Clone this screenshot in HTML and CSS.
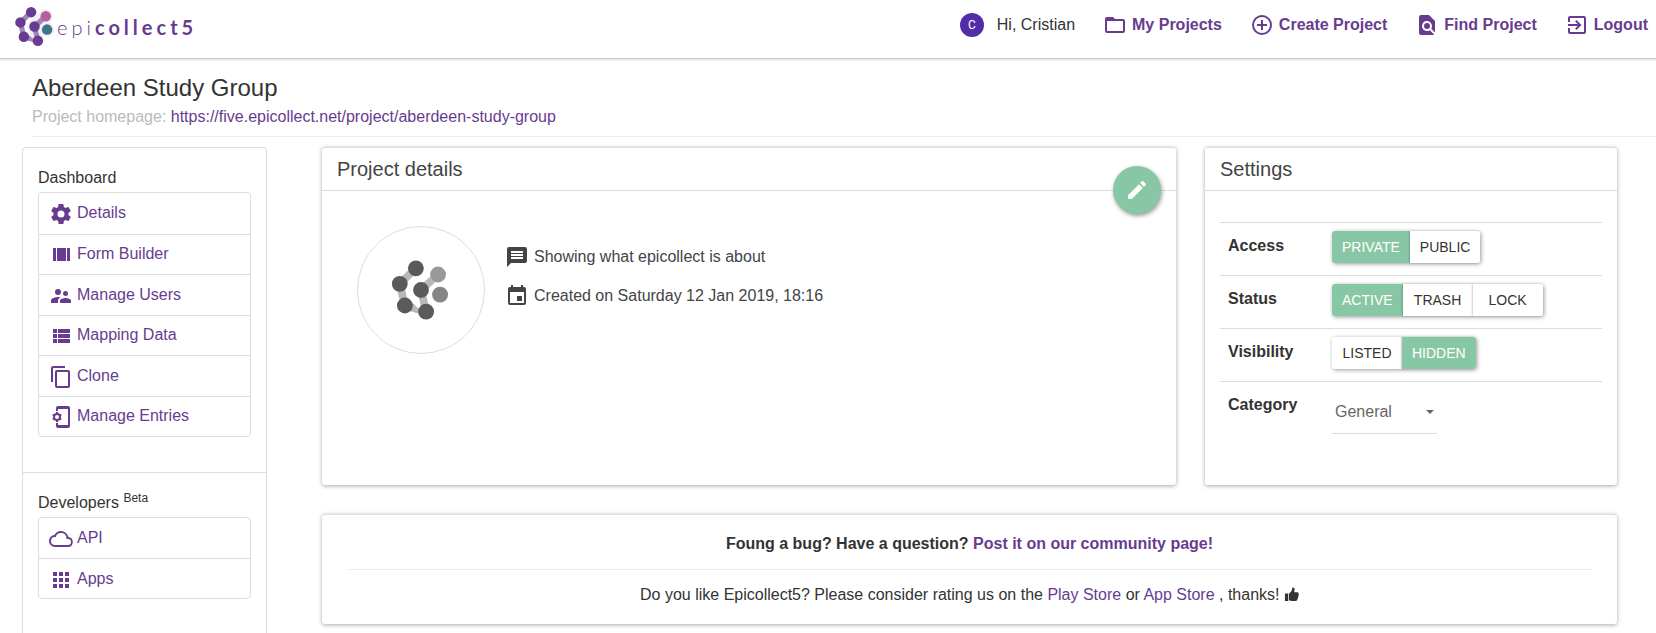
FILE: index.html
```html
<!DOCTYPE html>
<html lang="en">
<head>
<meta charset="utf-8">
<title>Aberdeen Study Group - Epicollect5</title>
<link rel="stylesheet" href="styles.css">
</head>
<body>
<svg class="sprite" aria-hidden="true">
  <symbol id="mark" viewBox="14 7 40 40">
    <path class="mark-link" d="M30.700 13 20.300 23 23.600 37 37.300 41"/>
    <path class="mark-halo" d="M45 17 34 27 36 33M46.300 30h.1"/>
    <path class="mark-link" d="M45 17 34 27 37.300 41"/>
    <g class="mark-main">
      <circle cx="30.700" cy="13" r="5.100"/><circle cx="20.300" cy="23" r="5.100"/><circle cx="34" cy="27" r="5.100"/>
      <circle cx="23.600" cy="37" r="5.100"/><circle cx="37.300" cy="41" r="5.100"/>
    </g>
    <circle class="mark-top" cx="45" cy="17" r="5.100"/>
    <circle class="mark-side" cx="46.300" cy="30" r="5.100"/>
  </symbol>
</svg>

<header class="navbar">
  <a class="brand" href="#">
    <svg class="brand-mark" aria-hidden="true"><use href="#mark"/></svg>
    <span class="brand-name">epi<b>collect5</b></span>
  </a>
  <nav class="nav">
    <span class="user"><span class="avatar">C</span>Hi, Cristian</span>
    <a href="#"><svg class="icon" viewBox="0 0 24 24"><path d="M20 18H4V8h16m0-2h-8l-2-2H4a2 2 0 0 0-2 2v12a2 2 0 0 0 2 2h16a2 2 0 0 0 2-2V8a2 2 0 0 0-2-2z"/></svg>My Projects</a>
    <a href="#"><svg class="icon" viewBox="0 0 24 24"><path d="M13 7h-2v4H7v2h4v4h2v-4h4v-2h-4V7zm-1-5a10 10 0 1 0 0 20 10 10 0 0 0 0-20zm0 18a8 8 0 1 1 0-16 8 8 0 0 1 0 16z"/></svg>Create Project</a>
    <a href="#"><svg class="icon" viewBox="0 0 24 24"><path d="M20 19.590V8l-6-6H6a2 2 0 0 0-2 2v16a2 2 0 0 0 2 2h12c.45 0 .85-.15 1.190-.4l-4.430-4.430A5 5 0 1 1 17 13c0 1.020-.31 1.970-.83 2.750L20 19.590zM9 13a3 3 0 1 0 6 0 3 3 0 0 0-6 0z"/></svg>Find Project</a>
    <a href="#"><svg class="icon" viewBox="0 0 24 24"><path d="M10.090 15.590 11.500 17l5-5-5-5-1.410 1.410L12.670 11H3v2h9.670l-2.580 2.590zM19 3H5a2 2 0 0 0-2 2v4h2V5h14v14H5v-4H3v4a2 2 0 0 0 2 2h14a2 2 0 0 0 2-2V5a2 2 0 0 0-2-2z"/></svg>Logout</a>
  </nav>
</header>

<div class="page-title">
  <h1>Aberdeen Study Group</h1>
  <p><span class="muted">Project homepage:</span> <a href="#">https://five.epicollect.net/project/aberdeen-study-group</a></p>
</div>

<div class="layout">
  <aside class="sidebar">
    <section class="side-section">
      <h2>Dashboard</h2>
      <ul class="menu menu-six">
        <li><a href="#"><svg class="icon" viewBox="0 0 24 24"><path d="M12 15.500a3.500 3.500 0 1 1 0-7 3.500 3.500 0 0 1 0 7m7.430-2.530c.04-.32.07-.64.07-.97s-.03-.66-.07-1l2.110-1.630c.19-.15.24-.42.12-.64l-2-3.460c-.12-.22-.39-.31-.61-.22l-2.490 1c-.52-.39-1.060-.73-1.690-.98l-.37-2.650A.5.500 0 0 0 14 2h-4c-.25 0-.46.18-.5.420l-.37 2.650c-.63.250-1.170.590-1.690.980l-2.490-1c-.22-.09-.49 0-.61.220l-2 3.460c-.13.220-.07.490.12.640L4.570 11c-.04.340-.07.670-.07 1s.03.650.07.970l-2.110 1.660c-.19.150-.25.420-.12.640l2 3.460c.12.220.39.300.61.220l2.490-1.010c.52.400 1.060.740 1.690.990l.37 2.650c.04.240.25.420.5.420h4c.25 0 .46-.18.500-.42l.37-2.650c.63-.26 1.170-.59 1.690-.99l2.490 1.010c.22.080.49 0 .61-.22l2-3.460c.12-.22.070-.49-.12-.64l-2.110-1.660z"/></svg>Details</a></li>
        <li><a href="#"><svg class="icon" viewBox="0 0 24 24"><path d="M4 18h3V5H4v13zM18 5v13h3V5h-3zM8 18h9V5H8v13z"/></svg>Form Builder</a></li>
        <li><a href="#"><svg class="icon" viewBox="0 0 24 24"><path d="M16.500 12a2.500 2.500 0 1 0 0-5 2.500 2.500 0 0 0 0 5zM9 11a3 3 0 1 0 0-6 3 3 0 0 0 0 6zm7.500 3c-1.830 0-5.500.920-5.500 2.750V19h11v-2.250c0-1.830-3.670-2.750-5.500-2.750zM9 13c-2.330 0-7 1.170-7 3.500V19h7v-2.250c0-.85.330-2.340 2.370-3.470C10.500 13.100 9.660 13 9 13z"/></svg>Manage Users</a></li>
        <li><a href="#"><svg class="icon" viewBox="0 0 24 24"><path d="M9 5v4h12V5M9 19h12v-4H9m0-1h12v-4H9m-5-1h4V5H4m0 14h4v-4H4m0-1h4v-4H4v4z"/></svg>Mapping Data</a></li>
        <li><a href="#"><svg class="icon" viewBox="0 0 24 24"><path d="M19 21H8V7h11m0-2H8a2 2 0 0 0-2 2v14a2 2 0 0 0 2 2h11a2 2 0 0 0 2-2V7a2 2 0 0 0-2-2m-3-4H4a2 2 0 0 0-2 2v14h2V3h12V1z"/></svg>Clone</a></li>
        <li><a href="#"><svg class="icon" viewBox="0 0 24 24"><path d="M19 1H9a2 2 0 0 0-2 2v3h2V4h10v16H9v-2H7v3a2 2 0 0 0 2 2h10a2 2 0 0 0 2-2V3a2 2 0 0 0-2-2z"/><circle class="gear-ring" cx="8" cy="12" r="3"/><path class="gear-teeth" d="M8 9V7M8 17v-2M5.400 10.500l-1.700-1M10.600 10.500l1.700-1M5.400 13.500l-1.700 1M10.600 13.500l1.700 1"/></svg>Manage Entries</a></li>
      </ul>
    </section>
    <section class="side-section">
      <h2>Developers <sup>Beta</sup></h2>
      <ul class="menu menu-two">
        <li><a href="#"><svg class="icon" viewBox="0 0 24 24"><path d="M19.350 10.040A7.490 7.490 0 0 0 12 4C9.110 4 6.600 5.640 5.350 8.040A5.994 5.994 0 0 0 0 14a6 6 0 0 0 6 6h13a5 5 0 0 0 .35-9.960zM19 18H6a4 4 0 0 1 0-8h.71a5.500 5.500 0 0 1 10.790 1.500v.5H19a3 3 0 0 1 0 6z"/></svg>API</a></li>
        <li><a href="#"><svg class="icon" viewBox="0 0 24 24"><path d="M4 8h4V4H4v4zm6 12h4v-4h-4v4zm-6 0h4v-4H4v4zm0-6h4v-4H4v4zm6 0h4v-4h-4v4zm6-10v4h4V4h-4zm-6 4h4V4h-4v4zm6 6h4v-4h-4v4zm0 6h4v-4h-4v4z"/></svg>Apps</a></li>
      </ul>
    </section>
  </aside>

  <main class="main">
    <section class="card details">
      <h2 class="card-head">Project details</h2>
      <button class="fab" type="button" aria-label="Edit project"><svg class="icon" viewBox="0 0 24 24"><path d="M20.710 7.040a1 1 0 0 0 0-1.410l-2.340-2.340a1 1 0 0 0-1.410 0l-1.840 1.830 3.750 3.750M3 17.250V21h3.750L17.810 9.930l-3.750-3.750L3 17.250z"/></svg></button>
      <div class="details-body">
        <div class="project-logo"><svg class="project-mark" aria-hidden="true"><use href="#mark"/></svg></div>
        <ul class="facts">
          <li><svg class="icon" viewBox="0 0 24 24"><path d="M20 2H4a2 2 0 0 0-2 2v18l4-4h14a2 2 0 0 0 2-2V4a2 2 0 0 0-2-2zm-2 12H6v-2h12v2zm0-3H6V9h12v2zm0-3H6V6h12v2z"/></svg>Showing what epicollect is about</li>
          <li><svg class="icon" viewBox="0 0 24 24"><path d="M19 19H5V8h14m-3-7v2H8V1H6v2H5a2 2 0 0 0-2 2v14a2 2 0 0 0 2 2h14a2 2 0 0 0 2-2V5a2 2 0 0 0-2-2h-1V1m-1 11h-5v5h5v-5z"/></svg>Created on Saturday 12 Jan 2019, 18:16</li>
        </ul>
      </div>
    </section>

    <section class="card settings">
      <h2 class="card-head">Settings</h2>
      <table class="settings-table">
        <tr><th scope="row">Access</th><td><div class="toggle"><button class="on" type="button">Private</button><button type="button">Public</button></div></td></tr>
        <tr><th scope="row">Status</th><td><div class="toggle"><button class="on" type="button">Active</button><button type="button">Trash</button><button type="button">Lock</button></div></td></tr>
        <tr><th scope="row">Visibility</th><td><div class="toggle"><button type="button">Listed</button><button class="on" type="button">Hidden</button></div></td></tr>
        <tr><th scope="row"><label for="category">Category</label></th><td><div class="select"><select id="category"><option>General</option></select></div></td></tr>
      </table>
    </section>

    <section class="card community">
      <p><b>Foung a bug? Have a question? <a href="#">Post it on our community page!</a></b></p>
      <hr>
      <p>Do you like Epicollect5? Please consider rating us on the <a href="#">Play Store</a> or <a href="#">App Store</a> , thanks! <svg class="thumb" viewBox="0 0 16 16"><path d="M1 7h3.500v8H1zM5.300 7.200 8 4.300 9 .6c1.600-.2 2.500.8 2.300 2.300L10.800 5.500h3.400c1.200 0 1.700 1 1.300 2 .4.700.3 1.400-.2 1.900.2.700.1 1.300-.4 1.800.1.700-.1 1.300-.6 1.700 0 1.300-.7 2.100-2 2.100H9c-1.300 0-2.300-.8-3.700-1z"/></svg></p>
    </section>
  </main>
</div>
</body>
</html>
```
FILE: styles.css
```css
* { box-sizing: border-box; }
body {
  margin: 0;
  min-height: 100vh;
  display: flex;
  flex-direction: column;
  font: 16px/22px "Liberation Sans", Arial, sans-serif;
  color: #333;
  background: #fff;
}
h1, h2, p, ul { margin: 0; padding: 0; font-weight: normal; }
ul { list-style: none; }
a { color: #673c90; text-decoration: none; }
button, select { font: inherit; color: inherit; }
.sprite { display: none; }
.icon { width: 24px; height: 24px; fill: currentColor; flex: none; }
.gear-ring { fill: none; stroke: currentColor; stroke-width: 2px; }
.gear-teeth { fill: none; stroke: currentColor; stroke-width: 2px; }

.navbar {
  display: flex;
  justify-content: space-between;
  align-items: flex-start;
  height: 59px;
  padding: 6px 8px 0 14px;
  border-bottom: 1px solid #ccc;
  box-shadow: 0 1px 2px rgba(0, 0, 0, .15);
}
.brand { display: flex; align-items: center; gap: 2px; }
.brand-mark { width: 41px; height: 41px; }
.brand-name { font: 300 20px/24px Lato, sans-serif; letter-spacing: 4px; }
.brand-name b { font-weight: 700; }
.mark-link, .mark-halo { fill: none; stroke-linejoin: round; stroke-linecap: round; }
.mark-link { stroke: var(--link, #a583bd); stroke-width: 5px; }
.mark-halo { stroke: var(--halo, #f3eff6); stroke-width: 14px; }
.mark-main { fill: var(--main, #673c90); }
.mark-top { fill: var(--top, #b45f9f); }
.mark-side { fill: var(--side, #3c7689); }

.nav { display: flex; gap: 28px; padding-top: 6px; }
.nav a, .user { display: flex; align-items: center; gap: 5px; height: 26px; }
.nav a { font-weight: bold; }
.user { gap: 13px; }
.avatar {
  width: 24px;
  height: 24px;
  border-radius: 50%;
  background: #512da8;
  color: #fff;
  font: 12px/24px Roboto, sans-serif;
  text-align: center;
}

.page-title { margin-left: 32px; padding: 16px 0 8px; border-bottom: 1px solid #eee; }
.page-title h1 { font-size: 24px; line-height: 26px; }
.page-title p { padding-top: 5px; }
.muted { color: #bbb; }

.layout {
  flex: 1;
  display: grid;
  grid-template-columns: 245fr 1295fr;
  gap: 55px;
  padding: 10px 39px 0 22px;
}
.sidebar { border: 1px solid #ddd; border-bottom: 0; border-radius: 4px 4px 0 0; }
.side-section { padding: 19px 15px 35px; }
.side-section + .side-section { border-top: 1px solid #ddd; }
.side-section h2 { font-size: 16px; line-height: 22px; padding-bottom: 3px; }
sup { font-size: 12px; line-height: 0; }
.menu { display: grid; grid-auto-rows: 1fr; border: 1px solid #ddd; border-radius: 4px; }
.menu-six { min-height: 245px; }
.menu-two { min-height: 82px; }
.menu li + li { border-top: 1px solid #ddd; }
.menu a { display: flex; align-items: center; gap: 4px; height: 100%; padding: 0 10px; }
.menu .icon { margin-top: 2px; }

.main {
  display: grid;
  grid-template-columns: 854fr 412fr;
  align-content: start;
  gap: 29px;
}
.card {
  position: relative;
  border-top: 1px solid #ddd;
  border-radius: 3px;
  background: #fff;
  box-shadow: 0 1px 4px rgba(0, 0, 0, .35);
}
.card-head { padding: 10px 15px; font-size: 20px; line-height: 22px; color: #444; border-bottom: 1px solid #ddd; }
.details { min-height: 338px; color: #444; }
.fab {
  position: absolute;
  top: 18px;
  right: 15px;
  width: 48px;
  height: 48px;
  padding: 12px;
  border: 0;
  border-radius: 50%;
  background: #88c7a6;
  color: #fff;
  box-shadow: 1px 2px 4px rgba(0, 0, 0, .4);
}
.fab .icon { display: block; }
.details-body { display: flex; gap: 20px; padding: 35px; }
.project-logo { display: grid; place-items: center; width: 128px; height: 128px; border: 1px solid #ddd; border-radius: 50%; }
.project-mark {
  --link: #b8b8b8;
  --halo: #fff;
  --main: #5a5a5a;
  --top: #999;
  --side: #858585;
  width: 62px;
  height: 62px;
}
.facts { display: grid; align-content: start; gap: 15px; padding-top: 19px; }
.facts li { display: flex; align-items: center; gap: 5px; }

.settings-table { width: calc(100% - 30px); margin: 31px 15px 0; border-collapse: collapse; }
.settings-table tr { border-top: 1px solid #ddd; }
.settings-table th { width: 104px; padding: 12px 8px; text-align: left; vertical-align: top; }
.settings-table td { height: 53px; padding: 8px; vertical-align: top; }
.toggle { display: inline-flex; border-radius: 3px; box-shadow: 1px 1px 4px rgba(0, 0, 0, .4); }
.toggle button {
  min-width: 70px;
  height: 32px;
  padding: 0 10px;
  border: 0;
  background: #fff;
  font-size: 14px;
  text-transform: uppercase;
}
.toggle button + button { box-shadow: -1px 0 2px rgba(0, 0, 0, .2); }
.toggle button:first-child { border-radius: 3px 0 0 3px; }
.toggle button:last-child { border-radius: 0 3px 3px 0; }
.toggle .on { background: #88c7a6; color: #fff; }
.select { position: relative; width: 105px; border-bottom: 1px solid #ddd; }
.select::after {
  content: "";
  position: absolute;
  right: 3px;
  top: 20px;
  border: 4px solid transparent;
  border-top-color: #666;
  border-bottom: 0;
}
.select select { width: 100%; height: 43px; padding: 0 3px; border: 0; background: none; color: #666; appearance: none; }

.community { grid-column: 1 / -1; padding: 18px 25px; text-align: center; }
.community hr { margin: 14px 0; border: 0; border-top: 1px solid #eee; }
.thumb { width: 15px; height: 15px; fill: currentColor; vertical-align: -2px; }
```
